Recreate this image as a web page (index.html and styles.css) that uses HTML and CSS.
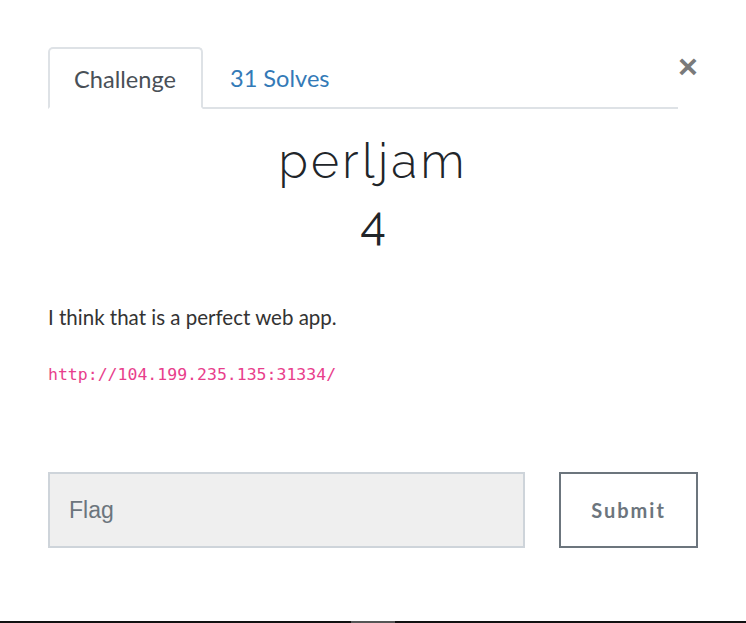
FILE: index.html
```html
<!DOCTYPE html>
<html>
<head>
<meta charset="utf-8">
<link rel="stylesheet" href="styles.css">
</head>
<body>
<div class="modal">
  <button class="close" aria-label="Close">&times;</button>
  <div class="body">
    <ul class="tabs">
      <li class="tab active">Challenge</li>
      <li class="tab link">31 Solves</li>
    </ul>
    <h3 class="name">perljam</h3>
    <h4 class="value">4</h4>
    <p class="desc">I think that is a perfect web app.</p>
    <p class="url"><code>http://104.199.235.135:31334/</code></p>
    <div class="submit-row">
      <input class="flag" type="text" placeholder="Flag">
      <button class="submit">Submit</button>
    </div>
  </div>
  <div class="bottom"><span class="thumb"></span></div>
</div>
</body>
</html>
```
FILE: styles.css
```css
html, body {
  margin: 0;
  padding: 0;
  background: #fff;
}
.modal {
  position: relative;
  width: 746px;
  height: 623px;
  overflow: hidden;
}
.body {
  padding: 47px 48px 0 48px;
}
.close {
  position: absolute;
  top: 49px;
  left: 678px;
  border: 0;
  background: none;
  padding: 0;
  font-family: "Liberation Sans", Arial, sans-serif;
  font-size: 34px;
  font-weight: 700;
  line-height: 34px;
  color: #7a7a7a;
}
.tabs {
  list-style: none;
  margin: 0 20px 0 0;
  padding: 0;
  display: flex;
  border-bottom: 2px solid #dee2e6;
  height: 60px;
}
.tab {
  font-family: Lato, sans-serif;
  font-size: 23.6px;
  line-height: 60px;
  padding: 0 24px;
  margin-bottom: -2px;
  border: 1px solid transparent;
  border-radius: 5px 5px 0 0;
}
.tab.active {
  color: #495057;
  border: 2px solid #dee2e6;
  border-bottom-color: #fff;
  background: #fff;
  height: 58px;
  padding-right: 25px;
}
.tab.link {
  color: #337ab7;
  padding-left: 26px;
}
.name {
  margin: 21px 0 0;
  text-align: center;
  font-family: Raleway, "Open Sans", sans-serif;
  font-weight: 300;
  font-size: 48px;
  line-height: 62px;
  letter-spacing: 3.3px;
  color: #212529;
}
.value {
  margin: 0;
  text-align: center;
  font-family: Raleway, "Open Sans", sans-serif;
  font-weight: 400;
  font-size: 47px;
  line-height: 62px;
  color: #212529;
}
.desc {
  margin: 48px 0 0;
  font-family: Lato, sans-serif;
  font-size: 20.5px;
  line-height: 30px;
  color: #333;
}
.url {
  margin: 29px 0 0;
  line-height: 28px;
}
.url code {
  font-family: "DejaVu Sans Mono", monospace;
  font-size: 16.5px;
  color: #e83e8c;
}
.submit-row {
  display: flex;
  justify-content: space-between;
  margin-top: 83px;
}
.flag {
  width: 477px;
  height: 76px;
  box-sizing: border-box;
  border: 2px solid #ced4da;
  background: #efefef;
  padding: 0 19px;
  font-family: "Liberation Sans", Arial, sans-serif;
  font-size: 23px;
  color: #495057;
}
.flag::placeholder {
  color: #6c757d;
}
.submit {
  width: 139px;
  height: 76px;
  box-sizing: border-box;
  border: 2px solid #6c757d;
  background: #fff;
  font-family: Lato, sans-serif;
  font-weight: 700;
  font-size: 20px;
  letter-spacing: 2px;
  color: #6c757d;
}
.bottom {
  position: absolute;
  left: 0;
  right: 0;
  bottom: 0;
  height: 2px;
  background: #111;
}
.thumb {
  position: absolute;
  left: 351px;
  width: 44px;
  top: 0;
  height: 2px;
  background: #555;
}
```
